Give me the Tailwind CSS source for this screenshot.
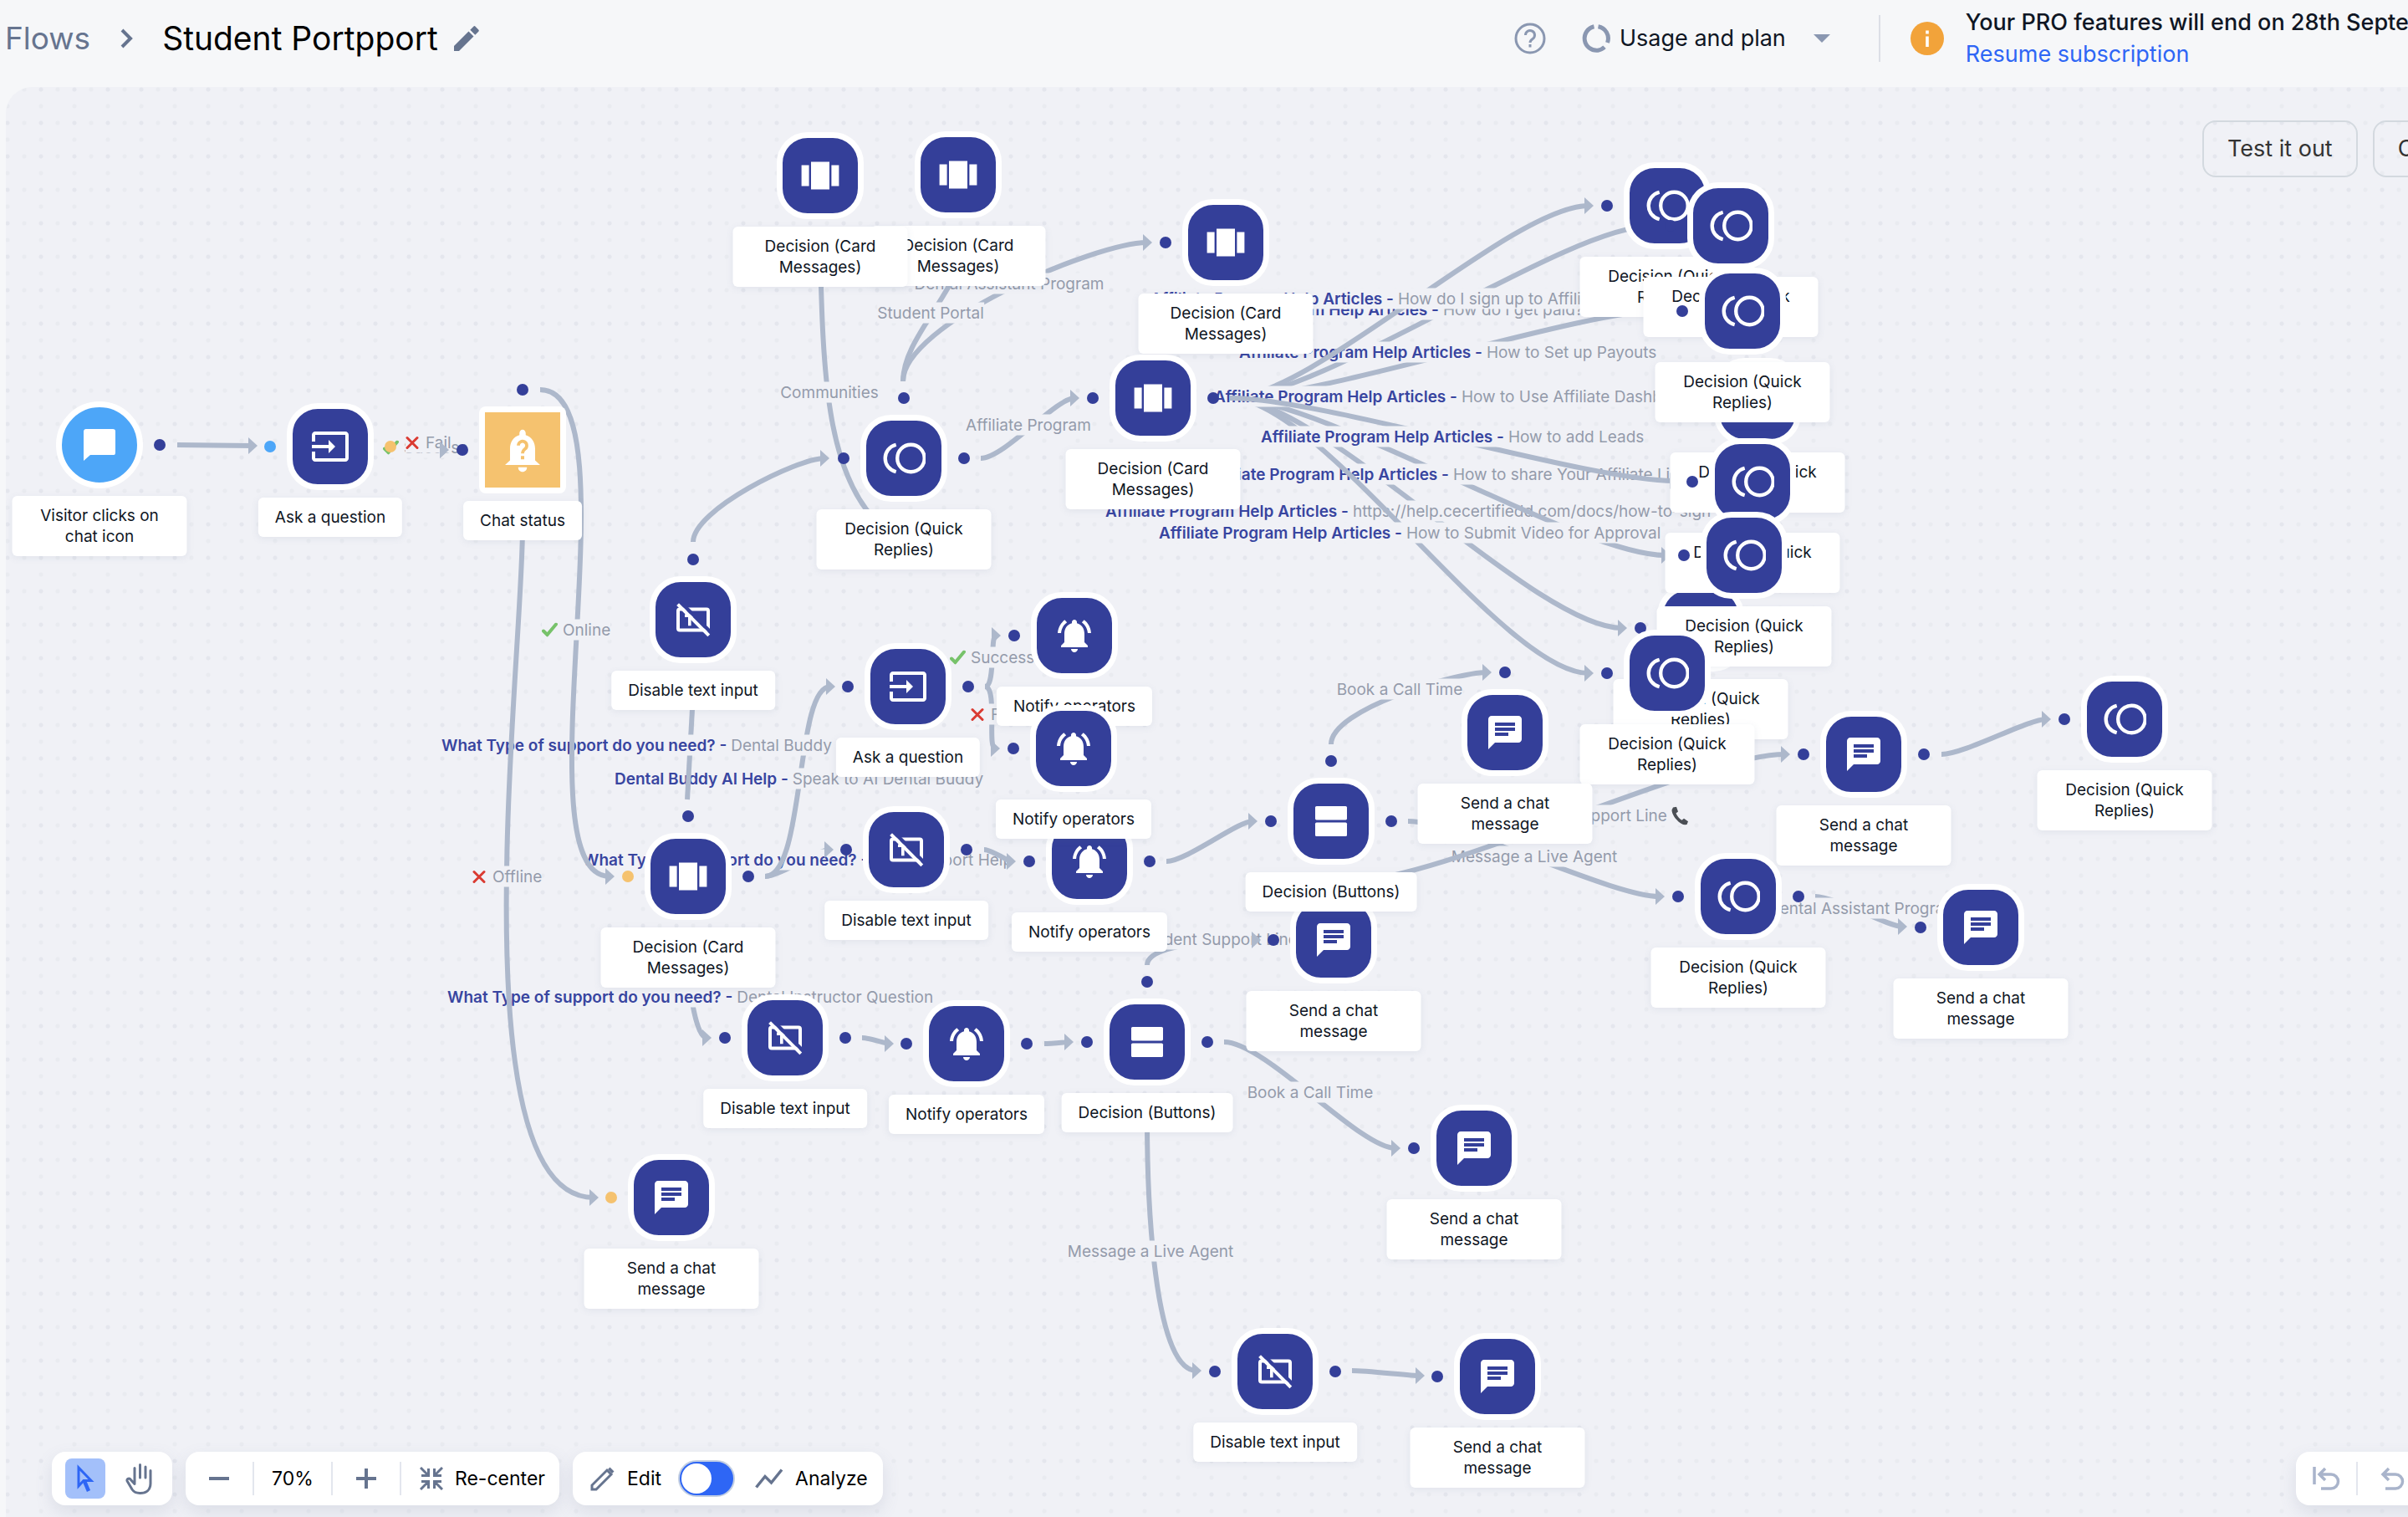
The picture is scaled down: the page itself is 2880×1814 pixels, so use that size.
<!DOCTYPE html>
<html lang="en">
<head>
<meta charset="utf-8">
<meta name="viewport" content="width=device-width, initial-scale=1">
<title>Flows - Student Portpport</title>
<script src="https://cdn.jsdelivr.net/npm/@tailwindcss/browser@4"></script>
</head>
<body class="flex h-screen flex-col overflow-hidden bg-[#f6f7f9] font-['Inter',sans-serif] text-[#0f1624]">

<svg class="hidden">
  <symbol id="i-bubble" viewBox="0 0 24 24"><path fill="#fff" d="M20 2.500H4c-1.100 0-1.500.9-1.500 1.500L2.500 21.500l4-3.500h14c1 0 1-.9 1-2V4c0-1.100-.5-1.500-1.500-1.500z"/></symbol>
  <symbol id="i-chat" viewBox="0 0 24 24"><path fill="#fff" d="M20 2H4c-1.100 0-1.990.9-1.990 2L2 22l4-4h14c1.100 0 2-.9 2-2V4c0-1.100-.9-2-2-2zM6 9h12v2H6V9zm8 5H6v-2h8v2zm4-6H6V6h12v2z"/></symbol>
  <symbol id="i-ask" viewBox="0 0 24 24"><path fill="#fff" d="M21 3.010H3c-1.100 0-2 .9-2 2V9h2V4.990h18v14.030H3V15H1v4.010c0 1.100.9 1.980 2 1.980h18c1.100 0 2-.88 2-1.980v-14c0-1.110-.9-2-2-2zM11 16l4-4-4-4v3H1v2h10v3z"/></symbol>
  <symbol id="i-cards" viewBox="0 0 24 24"><path fill="#fff" d="M.8 5.800h4.500v12.400H.8zM6.500 3.700h11v16.600h-11zM18.700 5.800h4.500v12.400h-4.500z"/></symbol>
  <symbol id="i-quick" viewBox="0 0 24 24"><g fill="none" stroke="#fff" stroke-width="2"><circle cx="15.900" cy="12" r="7.500"/><path d="M7.700 4.500C4 5.500 1.700 8.500 1.700 12s2.300 6.500 6 7.500"/></g></symbol>
  <symbol id="i-buttons" viewBox="0 0 24 24"><rect x="2.500" y="3" width="19" height="8.200" rx=".8" fill="#fff"/><rect x="2.500" y="12.800" width="19" height="8.200" rx=".8" fill="#fff"/></symbol>
  <symbol id="i-notify" viewBox="0 0 24 24"><path fill="#fff" d="M7.580 4.080L6.150 2.650C3.750 4.480 2.170 7.300 2.030 10.500h2c.15-2.650 1.510-4.970 3.550-6.420zm12.390 6.420h2c-.15-3.200-1.730-6.020-4.120-7.850l-1.420 1.430c2.020 1.450 3.390 3.770 3.540 6.420zM18 11c0-3.070-1.640-5.640-4.500-6.320V4c0-.83-.67-1.500-1.500-1.500s-1.500.67-1.500 1.500v.68C7.630 5.360 6 7.920 6 11v5l-2 2v1h16v-1l-2-2v-5zm-6 11c.14 0 .27-.01.4-.04.65-.14 1.180-.58 1.440-1.180.1-.24.15-.5.15-.78h-4c.01 1.100.9 2 2.010 2z"/></symbol>
  <symbol id="i-notext" viewBox="0 0 24 24"><rect x="3" y="5.800" width="18" height="12.400" rx="1" fill="none" stroke="#fff" stroke-width="2"/><path d="M7 9.600h6M9.900 9.600v6" stroke="#fff" stroke-width="1.800" fill="none"/><path d="M4.600 1.600L23 20" stroke="#343f99" stroke-width="2.200"/><path d="M2.800 2.800L21.400 21.400" stroke="#fff" stroke-width="2"/></symbol>
  <symbol id="i-status" viewBox="0 0 24 24"><path fill="#fff" d="M12 22.500c1.200 0 2.100-.9 2.100-2.200H9.900c0 1.300.9 2.200 2.100 2.200zM18 17v-5.500c0-3.200-1.700-5.900-4.500-6.600V4c0-.9-.7-1.700-1.500-1.700s-1.500.8-1.500 1.700v.9C7.600 5.600 6 8.300 6 11.500V17l-2.400 2.200h16.800z"/><path d="M10 9.900a2 2 0 1 1 3.200 1.600c-.8.600-1.200 1-1.200 2.200" fill="none" stroke="#f5c26f" stroke-width="1.500"/><rect x="11.200" y="14.900" width="1.600" height="1.600" fill="#f5c26f"/></symbol>
</svg>

<header class="grid h-[104px] shrink-0 grid-cols-[1811fr_1069fr] items-center pb-3">
  <nav class="flex items-center pl-[6px]" aria-label="Breadcrumb">
    <a href="#" class="text-[37px] leading-[48px] text-[#66748f]">Flows</a>
    <svg class="ml-[36px] h-6 w-4" viewBox="0 0 16 24" fill="none" stroke="#66748f" stroke-width="4"><path d="M2 2l10 10L2 22"/></svg>
    <h1 class="ml-[34px] text-[39px] leading-[48px] text-black">Student Portpport</h1>
    <button type="button" class="ml-[18px]" aria-label="Rename flow"><svg class="size-8" viewBox="0 0 32 32" fill="#66748f"><path d="M1 25v6h6L24.500 13.500l-6-6zM30.300 7.700a1.600 1.600 0 0 0 0-2.300l-3.700-3.700a1.600 1.600 0 0 0-2.300 0l-4 4 6 6z"/></svg></button>
  </nav>
  <div class="flex min-w-0 items-center overflow-hidden">
    <button type="button" class="shrink-0" aria-label="Help"><svg class="size-[38px]" viewBox="0 0 38 38" fill="none" stroke="#8a97b1" stroke-width="3"><circle cx="19" cy="19" r="17"/><path d="M13.500 15a5.500 5.500 0 1 1 8.600 4.500c-2 1.400-3.100 2.300-3.100 4.500"/><path d="M19 26v3.500"/></svg></button>
    <button type="button" class="ml-[42px] flex shrink-0 items-center text-[27px] leading-9">
      <svg class="size-[36px]" viewBox="0 0 36 36" fill="none" stroke="#8a97b1" stroke-width="5"><path d="M15.500 3.800A14.400 14.400 0 0 0 20 32.200a14.400 14.400 0 0 0 8-4"/><path d="M20.500 3.800A14.400 14.400 0 0 1 31.500 23"/></svg>
      <span class="ml-[10px]">Usage and plan</span>
      <svg class="ml-[33px] h-[10px] w-5" viewBox="0 0 20 10" fill="#8a97b1"><path d="M0 0h20L10 10z"/></svg>
    </button>
    <div class="ml-[58px] h-14 w-[2px] shrink-0 bg-[#dcdfe6]"></div>
    <svg class="ml-[36px] size-10 shrink-0" viewBox="0 0 40 40"><circle cx="20" cy="20" r="20" fill="#f2a33a"/><path d="M18.200 17.500h3.600V30h-3.600zM18.200 10.500h3.600v4h-3.600z" fill="#fff"/></svg>
    <div class="ml-[26px] shrink-0 whitespace-nowrap text-[27px] leading-[38px]">
      <p class="font-medium">Your PRO features will end on 28th September</p>
      <a href="#" class="block text-[#2e66f5]">Resume subscription</a>
    </div>
  </div>
</header>

<main class="relative ml-[7px] min-h-0 flex-1 overflow-hidden rounded-tl-[32px] bg-[#f0f1f6] bg-[image:radial-gradient(circle,#e4e6ed_2px,transparent_3px),radial-gradient(circle,#e9ebf0_2px,transparent_3px),radial-gradient(circle,#e9ebf0_2px,transparent_3px)] bg-[size:40px_40px] bg-[position:-18px_-17px,2px_-17px,-18px_3px]">

  <div id="canvas" class="absolute -left-[7px] -top-[104px]"></div>

  <div class="absolute left-[2627px] top-10 flex gap-[18px]">
    <button type="button" class="h-[68px] whitespace-nowrap rounded-2xl border-2 border-[#d3d9df] px-7 text-[27px] text-[#333]">Test it out</button>
    <button type="button" class="h-[68px] whitespace-nowrap rounded-2xl border-2 border-[#d3d9df] px-7 text-[27px] text-[#333]">Copy</button>
  </div>

  <div class="absolute bottom-[14px] left-[55px] flex gap-4 text-[23px] text-black">
    <div class="flex h-16 w-36 items-center rounded-2xl bg-white px-4 shadow-[0_8px_20px_rgba(100,116,150,0.15)]">
      <button type="button" class="flex size-12 items-center justify-center rounded-lg bg-[#a3c0fa]" aria-label="Select"><svg class="size-9" viewBox="0 0 36 36" fill="none" stroke="#2e66f5" stroke-width="3"><path d="M10 5v22l6-6.500h9z"/><path d="M16.500 20l5.500 13" stroke-width="4.500"/></svg></button>
      <button type="button" class="ml-6 flex items-center" aria-label="Pan"><svg class="h-[38px] w-8" viewBox="0 0 32 38" fill="none" stroke="#66748f" stroke-width="3" stroke-linejoin="round" stroke-linecap="round"><path d="M11 19V6.500M17.500 18V2.500M24 18V5M11 24V6.500M11 25.500L5.500 19.500c-1.500-1.200-4 .2-3.500 2.200L8 32c2 3 5 4.500 9.500 4.500 7.500 0 12.500-4 12.500-11.500V9.500"/></svg></button>
    </div>
    <div class="flex h-16 w-[447px] items-center rounded-2xl bg-white shadow-[0_8px_20px_rgba(100,116,150,0.15)]">
      <button type="button" class="flex h-full w-20 items-center justify-center" aria-label="Zoom out"><svg class="h-1 w-6" viewBox="0 0 24 4"><path d="M0 0h24v4H0z" fill="#66748f"/></svg></button>
      <div class="flex h-10 w-24 items-center justify-center border-x-2 border-[#e3e6ee]">70%</div>
      <button type="button" class="flex h-10 w-[82px] items-center justify-center border-r-2 border-[#e3e6ee]" aria-label="Zoom in"><svg class="size-6" viewBox="0 0 24 24"><path d="M10 0h4v10h10v4H14v10h-4V14H0v-4h10z" fill="#66748f"/></svg></button>
      <button type="button" class="ml-[22px] flex items-center gap-[14px] whitespace-nowrap"><svg class="size-7" viewBox="0 0 28 28" fill="none" stroke="#66748f" stroke-width="3"><path d="M1 1l8 8M27 1l-8 8M1 27l8-8M27 27l-8-8M10.500 2v8.500H2M17.500 2v8.500H26M10.500 26v-8.500H2M17.500 26v-8.500H26"/></svg>Re-center</button>
    </div>
    <div class="flex h-16 w-[371px] items-center rounded-2xl bg-white pl-[21px] shadow-[0_8px_20px_rgba(100,116,150,0.15)]">
      <label for="mode" class="flex items-center"><svg class="size-[30px]" viewBox="0 0 30 30" fill="none" stroke="#66748f" stroke-width="3"><path d="M2 28v-5L20 5l5 5L7 28z"/><path d="M21 4l2.500-2.500 5 5L26 9z" fill="#66748f" stroke="none"/></svg><span class="ml-[14px]">Edit</span></label>
      <input id="mode" type="checkbox" role="switch" class="ml-5 h-11 w-[68px] shrink-0 appearance-none rounded-full border-2 border-[#c3cfe3] bg-[#2e66f5] p-[2px] before:block before:size-9 before:rounded-full before:bg-white">
      <button type="button" class="ml-6 flex items-center gap-[14px]"><svg class="h-[26px] w-[34px]" viewBox="0 0 34 26" fill="none" stroke="#66748f" stroke-width="3.500"><path d="M1.500 23.500L12 10.500l7.500 7.500L32 2.500"/></svg>Analyze</button>
    </div>
  </div>

  <div class="absolute bottom-[14px] left-[2739px] flex h-16 w-60 items-center rounded-2xl bg-white shadow-[0_8px_20px_rgba(100,116,150,0.15)]">
    <button type="button" class="flex h-10 w-[74px] items-center justify-center border-r-2 border-[#e3e6ee]" aria-label="Undo all"><svg class="h-8 w-[34px]" viewBox="0 0 34 32" fill="none" stroke="#a9b4cb" stroke-width="3.500"><path d="M3 2v21M16 4l-7 7 7 7M10 11h13a8 8 0 0 1 0 17H11"/></svg></button>
    <button type="button" class="flex h-10 w-[82px] items-center justify-center" aria-label="Undo"><svg class="h-8 w-[30px]" viewBox="0 0 30 32" fill="none" stroke="#a9b4cb" stroke-width="3.500"><path d="M11 4l-7 7 7 7M5 11h14a8 8 0 0 1 0 17H7"/></svg></button>
  </div>
</main>

<script>
const NAVY = 'bg-[#343f99]', YELLOW = 'bg-[#f5c26f]', SKY = 'bg-[#4da6f8]';
const AP = 'Affiliate Program Help Articles -', WT = 'What Type of support do you need? -';
const CHECK = '<svg class="mr-[6px] h-[17px] w-[19px]" viewBox="0 0 19 17" fill="none" stroke="#77c26a" stroke-width="4" stroke-linecap="round"><path d="M2 10l4.500 4.500L17 2"/></svg>';
const CROSS = '<svg class="mr-2 h-4 w-4" viewBox="0 0 16 16" fill="none" stroke="#da3b32" stroke-width="3" stroke-linecap="round"><path d="M2 2l12 12M14 2L2 14"/></svg>';
const PHONE = '<svg class="ml-[5px] h-[22px] w-[21px]" viewBox="0 0 21 22"><path d="M2 1l4-.8 2 5.800-2.500 2c1.500 3.500 4 6.500 7 8.300l2.500-2 5 3.500-1.500 3.700c-2 1-5 .3-8-2C5 15.500.5 9 .5 4z" fill="#4b4f55"/></svg>';

// Edges: {s: start, e: arrow tip, up/down: leaves vertically, d: explicit path, l: label {x, y, b: bold part, t: text, c: centred}}
const edges = [
  {s:[212,532], e:[308,533]},
  {s:[488,533], e:[537,538], l:{x:458,y:535,i:CHECK,t:'Success'}},
  {s:[488,533], e:[537,538], nopath:1, l:{x:485,y:529,i:CROSS,t:'Fail'}},
  {d:'M981 300C984 450 990 560 1045 620', l:{x:992,y:469,c:1,t:'Communities'}},
  {s:[1080,456], e:[1378,290], up:1, l:{x:1207,y:339,c:1,t:'Dental Assistant Program'}},
  {d:'M1080 456C1080 410 1130 365 1150 310', l:{x:1113,y:374,c:1,t:'Student Portal'}},
  {s:[829,648], e:[992,548], up:1},
  {s:[1173,548], e:[1291,476], l:{x:1230,y:508,c:1,t:'Affiliate Program'}},
  {s:[1471,476], e:[1946,751], l:{x:1322,y:611,b:AP,t:'https://help.cecertifiedd.com/docs/how-to-sign-up'}},
  {s:[1471,476], e:[1998,664], l:{x:1442,y:567,b:AP,t:'How to share Your Affiliate Link'}},
  {s:[1471,476], e:[1906,805], l:{x:1386,y:637,b:AP,t:'How to Submit Video for Approval'}},
  {s:[1471,476], e:[1982,270], l:{x:1430,y:370,b:AP,t:'How do I get paid?'}},
  {s:[1471,476], e:[1996,371], l:{x:1482,y:421,b:AP,t:'How to Set up Payouts'}},
  {s:[1471,476], e:[1906,246], l:{x:1376,y:357,b:AP,t:'How do I sign up to Affiliate Program?'}},
  {s:[1471,476], e:[2014,480], l:{x:1452,y:474,b:AP,t:'How to Use Affiliate Dashboard'}},
  {s:[1471,476], e:[2008,575], l:{x:1508,y:522,b:AP,t:'How to add Leads'}},
  {s:[915,1048], e:[997,1016], l:{x:697,y:1028,b:WT,t:'Tech Support Help'}},
  {s:[915,1048], e:[999,821], l:{x:735,y:931,b:'Dental Buddy AI Help -',t:'Speak to AI Dental Buddy'}},
  {d:'M822 956L829 830', l:{x:528,y:891,b:WT,t:'Dental Buddy Info'}},
  {s:[822,1141], e:[851,1241], down:1, l:{x:535,y:1192,b:WT,t:'Dental Instructor Question'}},
  {s:[1178,821], e:[1197,760], l:{x:1136,y:786,i:CHECK,t:'Success'}},
  {s:[1178,821], e:[1196,895], l:{x:1161,y:854,i:CROSS,t:'Fail'}},
  {s:[646,466], e:[735,1048], l:{x:648,y:753,i:CHECK,t:'Online'}},
  {d:'M625 631C625 792 545 1432 710 1432', e:[716,1432], l:{x:565,y:1048,i:CROSS,t:'Offline'}},
  {s:[1177,1016], e:[1215,1030]},
  {s:[1031,1241], e:[1069,1248]},
  {s:[1249,1248], e:[1284,1246]},
  {s:[1395,1030], e:[1504,982]},
  {s:[1592,890], e:[1784,804], up:1, l:{x:1674,y:824,c:1,t:'Book a Call Time'}},
  {s:[1684,982], e:[1991,1072], l:{x:1835,y:1024,c:1,t:'Message a Live Agent'}},
  {s:[1613,1054], e:[2141,902], l:{x:1804,y:975,t:'Student Support Line',a:PHONE}},
  {s:[1372,1154], e:[1508,1124], up:1, l:{x:1362,y:1123,t:'Student Support Line',a:PHONE}},
  {s:[1464,1246], e:[1675,1373], l:{x:1567,y:1306,c:1,t:'Book a Call Time'}},
  {s:[1372,1339], e:[1437,1639], down:1, l:{x:1376,y:1496,c:1,t:'Message a Live Agent'}},
  {s:[1617,1639], e:[1704,1645]},
  {s:[2322,902], e:[2453,860]},
  {s:[2171,1072], e:[2281,1108], l:{x:2115,y:1086,t:'Dental Assistant Program'}},
];

// Nodes in stacking order: [x, y, icon, caption, ports]
const CARD = 'Decision (Card Messages)', QUICK = 'Decision (Quick Replies)', SEND = 'Send a chat message';
const ASK = 'Ask a question', OFF = 'Disable text input', OPS = 'Notify operators', BTN = 'Decision (Buttons)';
const nodes = [
  [119,532,'i-bubble','Visitor clicks on chat icon','r'],
  [395,534,'i-ask',ASK,'Lq'],
  [625,538,'i-status','Chat status','lt'],
  [1146,209,'i-cards',CARD,''],
  [981,210,'i-cards',CARD,''],
  [1466,290,'i-cards',CARD,'l'],
  [1081,548,'i-quick',QUICK,'lrt'],
  [1379,476,'i-cards',CARD,'lr'],
  [1994,246,'i-quick',QUICK,'l'],
  [2070,270,'i-quick',QUICK,'l'],
  [2034,751,'i-quick',QUICK,'l'],
  [2102,480,'i-quick',QUICK,'l'],
  [2084,372,'i-quick',QUICK,'l'],
  [2096,576,'i-quick',QUICK,'l'],
  [2086,664,'i-quick',QUICK,'l'],
  [1994,805,'i-quick',QUICK,'l'],
  [829,741,'i-notext',OFF,'t'],
  [1086,821,'i-ask',ASK,'lr'],
  [1285,760,'i-notify',OPS,'l'],
  [1303,1030,'i-notify',OPS,'lr'],
  [1284,895,'i-notify',OPS,'l'],
  [1084,1016,'i-notext',OFF,'lr'],
  [823,1048,'i-cards',CARD,'yrt'],
  [939,1241,'i-notext',OFF,'lr'],
  [1156,1248,'i-notify',OPS,'lr'],
  [1595,1124,'i-chat',SEND,'l'],
  [1592,982,'i-buttons',BTN,'lrt'],
  [1372,1246,'i-buttons',BTN,'lrt'],
  [803,1432,'i-chat',SEND,'y'],
  [1800,876,'i-chat',SEND,'t'],
  [1763,1373,'i-chat',SEND,'l'],
  [1525,1640,'i-notext',OFF,'lr'],
  [1791,1646,'i-chat',SEND,'l'],
  [2229,902,'i-chat',SEND,'lr'],
  [2541,860,'i-quick',QUICK,'l'],
  [2079,1072,'i-quick',QUICK,'lr'],
  [2369,1109,'i-chat',SEND,'l'],
];

function curve(g) {
  if (g.d) return g.d;
  const [x1, y1] = g.s, [x2, y2] = g.e, k = 0.2 * Math.hypot(x2 - x1, y2 - y1);
  const a = g.up ? [x1, y1 - k] : g.down ? [x1, y1 + k] : [x1 + k, y1];
  return `M${x1} ${y1}C${a[0]} ${a[1]} ${x2 - k} ${y2} ${x2 - 6} ${y2}`;
}
const layer = inner => `<svg class="absolute left-0 top-0 size-px overflow-visible">${inner}</svg>`;
const PLACE = {
  left: 'absolute flex -translate-y-1/2 items-center whitespace-nowrap bg-[#f0f1f6] text-[19px] leading-[25px] text-[#949bab]',
  centre: 'absolute flex -translate-x-1/2 -translate-y-1/2 items-center whitespace-nowrap bg-[#f0f1f6] text-[19px] leading-[25px] text-[#949bab]',
};
function edge(g) {
  let out = g.nopath ? '' : layer(`<path d="${curve(g)}" fill="none" stroke="#adb8cb" stroke-width="6"/>`);
  if (g.l) {
    const l = g.l;
    out += `<div class="${l.c ? PLACE.centre : PLACE.left}" style="left:${l.x}px;top:${l.y}px">${l.i || ''}` +
      (l.b ? `<span class="mr-[5px] font-semibold text-[#3845a0]">${l.b}</span>` : '') + `<span>${l.t}</span>${l.a || ''}</div>`;
  }
  if (g.e) out += layer(`<path d="M${g.e[0]} ${g.e[1]}l-11 -10v20z" fill="#adb8cb"/>`);
  return out;
}

const PORTS = {l:[-72,0,NAVY], L:[-72,0,SKY], y:[-72,0,YELLOW], r:[72,0,NAVY], q:[72,0,YELLOW], t:[0,-72,NAVY]};
const SHAPES = {
  'i-bubble': 'absolute flex size-26 -translate-1/2 items-center justify-center rounded-full border-7 border-white bg-[#4da6f8]',
  'i-status': 'absolute flex size-26 -translate-1/2 items-center justify-center rounded-lg bg-white p-[7px]',
};
const SHAPE = 'absolute flex size-26 -translate-1/2 items-center justify-center rounded-[37px] border-7 border-white bg-[#343f99]';
function node([x, y, icon, text, ports]) {
  const size = icon === 'i-quick' ? 'size-[52px]' : 'size-12';
  const art = icon === 'i-status'
    ? `<span class="flex size-[90px] items-center justify-center bg-[#f5c26f]"><svg class="size-[60px]"><use href="#i-status"/></svg></span>`
    : `<svg class="${size} shrink-0"><use href="#${icon}"/></svg>`;
  return `<div class="absolute" style="left:${x}px;top:${y}px">` +
    `<div class="absolute top-[61px] w-max max-w-[209px] -translate-x-1/2 rounded-md bg-white px-5 py-[11px] text-center text-[19px] leading-[25px] shadow-[0_2px_8px_rgba(100,116,150,0.1)]">${text}</div>` +
    `<div class="${SHAPES[icon] || SHAPE}">${art}</div>` +
    [...ports].map(p => `<span class="absolute size-[14px] -translate-1/2 rounded-full ${PORTS[p][2]}" style="left:${PORTS[p][0]}px;top:${PORTS[p][1]}px"></span>`).join('') +
    '</div>';
}
document.getElementById('canvas').innerHTML = edges.map(edge).join('') + nodes.map(node).join('');
</script>
</body>
</html>
